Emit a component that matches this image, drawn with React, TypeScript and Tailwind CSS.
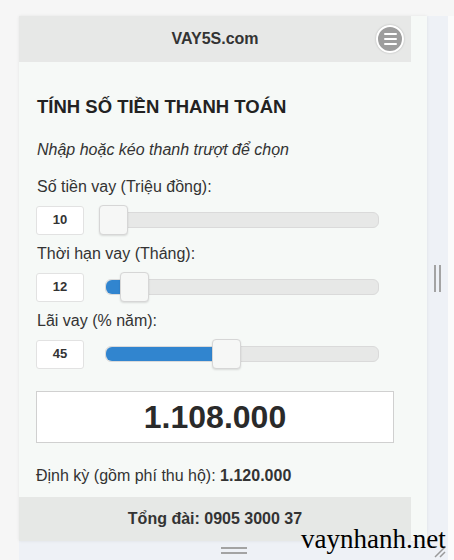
import React from "react";

const sliders = [
  { label: "Số tiền vay (Triệu đồng):", value: "10", pos: 0 },
  { label: "Thời hạn vay (Tháng):", value: "12", pos: 7.7 },
  { label: "Lãi vay (% năm):", value: "45", pos: 41.6 },
];

function Slider({ pos }: { pos: number }) {
  return (
    <div className="relative ml-[21px] h-[16px] w-[274px] rounded-[6px] border border-[#dadada] bg-[#e7e8e7]">
      <div className="h-full rounded-l-[6px] bg-[#3185cf]" style={{ width: `${pos}%` }} />
      <div
        className="absolute top-[-8px] h-[30px] w-[29px] rounded-[4px] border border-[#d6d6d6] bg-[#f6f7f6] shadow-[0_1px_2px_rgba(0,0,0,0.12)]"
        style={{ left: `calc(${pos}% - 7px)` }}
      />
    </div>
  );
}

export default function App() {
  return (
    <div className="relative h-[560px] w-[454px] overflow-hidden bg-[#f6f6f6] font-['Liberation_Sans',Arial,sans-serif] text-[#333]">
      <div className="flex pl-[19px] pt-[16px]">
        <div className="w-[429px] bg-[#eef1f6]">
          <div className="flex">
            <div className="w-[408px] bg-[#f6f9f7] shadow-[0_0_3px_rgba(0,0,0,0.08)]">
              <header className="relative flex h-[46px] w-[392px] items-center justify-center bg-[#e7e8e7]">
                <span className="text-[16px] font-bold text-[#333]">VAY5S.com</span>
                <button className="absolute right-[7px] top-[9px] flex h-[28px] w-[28px] flex-col items-center justify-center gap-[3px] rounded-full border-2 border-white bg-[#9d9d9d] shadow-[0_0_2px_rgba(0,0,0,0.25)]">
                  <span className="h-[2px] w-[13px] rounded bg-white" />
                  <span className="h-[2px] w-[13px] rounded bg-white" />
                  <span className="h-[2px] w-[13px] rounded bg-white" />
                </button>
              </header>

              <div className="w-[392px] px-[17px] pb-[11px] pt-[34px]">
                <h2 className="pl-[1px] text-[18.5px] font-bold leading-[22px] text-[#222]">TÍNH SỐ TIỀN THANH TOÁN</h2>
                <p className="mt-[22px] pl-[1px] text-[16px] italic leading-[20px]">Nhập hoặc kéo thanh trượt để chọn</p>

                <div className="mt-[17px]">
                  {sliders.map((s, i) => (
                    <div key={i} className={i === 0 ? "" : "mt-[9px]"}>
                      <p className="pl-[1px] text-[16px] leading-[20px]">{s.label}</p>
                      <div className="mt-[8px] flex h-[30px] items-center">
                        <div className="flex h-[29px] w-[48px] items-center justify-center rounded-[3px] border border-[#e2e2e2] bg-white text-[13px] font-bold">
                          {s.value}
                        </div>
                        <Slider pos={s.pos} />
                      </div>
                    </div>
                  ))}
                </div>

                <div className="mt-[22px] flex h-[52px] w-[358px] items-center justify-center border border-[#d0d0d0] bg-white">
                  <span className="text-[32px] font-bold text-[#2a2a2a]">1.108.000</span>
                </div>

                <p className="mt-[23px] text-[16px] leading-[20px]">
                  Định kỳ (gồm phí thu hộ): <b>1.120.000</b>
                </p>
              </div>

              <footer className="flex h-[44px] w-[392px] items-center justify-center bg-[#e6e8e6]">
                <span className="text-[16px] font-bold text-[#333]">Tổng đài: 0905 3000 37</span>
              </footer>
            </div>
            <div className="flex flex-1 items-center justify-center gap-[3px]">
              <span className="h-[27px] w-[2px] bg-[#a3a3a3]" />
              <span className="h-[27px] w-[2px] bg-[#a3a3a3]" />
            </div>
          </div>
          <div className="relative flex h-[19px] flex-col items-center justify-center gap-[3px]">
            <span className="h-[2px] w-[26px] bg-[#a3a3a3]" />
            <span className="h-[2px] w-[26px] bg-[#a3a3a3]" />
            <svg className="absolute right-[2px] bottom-[2px]" width="14" height="14" viewBox="0 0 14 14">
              <path d="M13 3 L3 13 M13 8 L8 13" stroke="#9a9a9a" strokeWidth="1.5" />
            </svg>
          </div>
        </div>
        <div className="flex-1 bg-[#fbfbfb]" />
      </div>

      <span className="absolute left-[301px] top-[524px] font-['Liberation_Serif','Times_New_Roman',serif] text-[27px] leading-[30px] text-black">
        vaynhanh.net
      </span>
    </div>
  );
}
